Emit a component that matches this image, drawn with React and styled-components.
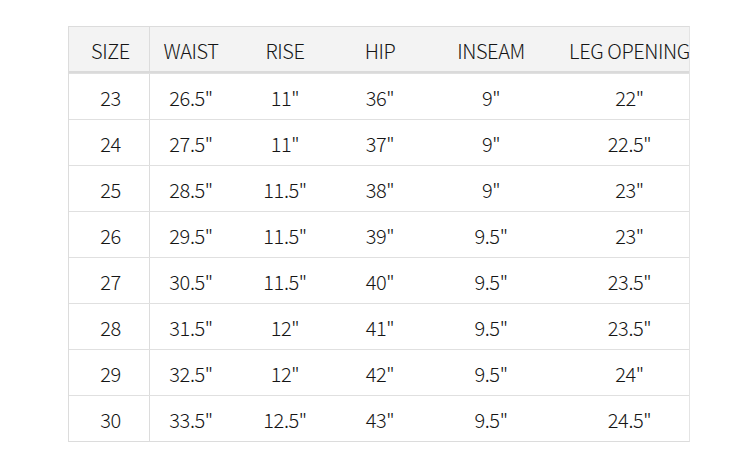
import styled, { createGlobalStyle } from 'styled-components'

const GlobalStyle = createGlobalStyle`
  html, body {
    margin: 0;
    padding: 0;
    background: #fff;
  }
`

const headers = ['SIZE', 'WAIST', 'RISE', 'HIP', 'INSEAM', 'LEG OPENING']

const rows = [
  ['23', '26.5"', '11"', '36"', '9"', '22"'],
  ['24', '27.5"', '11"', '37"', '9"', '22.5"'],
  ['25', '28.5"', '11.5"', '38"', '9"', '23"'],
  ['26', '29.5"', '11.5"', '39"', '9.5"', '23"'],
  ['27', '30.5"', '11.5"', '40"', '9.5"', '23.5"'],
  ['28', '31.5"', '12"', '41"', '9.5"', '23.5"'],
  ['29', '32.5"', '12"', '42"', '9.5"', '24"'],
  ['30', '33.5"', '12.5"', '43"', '9.5"', '24.5"'],
]

const App = () => {
  return (
    <>
      <GlobalStyle />
      <Page>
        <Table>
          <HeadRow>
            {headers.map((h, i) => (
              <Cell key={h} $first={i === 0} $last={i === 5}>{h}</Cell>
            ))}
          </HeadRow>
          {rows.map((r) => (
            <Row key={r[0]}>
              {r.map((v, i) => (
                <Cell key={i} $first={i === 0} $last={i === 5}>{v}</Cell>
              ))}
            </Row>
          ))}
        </Table>
      </Page>
    </>
  )
}

export default App

const Page = styled.div`
  width: 750px;
  height: 470px;
  padding: 26px 0 0 68px;
  box-sizing: border-box;
  font-family: 'Noto Sans CJK SC', 'Noto Sans', sans-serif;
  font-weight: 300;
  color: #151515;
`
const Table = styled.div`
  width: 622px;
  border: 1px solid #dcdcdc;
  border-right-color: #e4e4e4;
  box-sizing: border-box;
`
const Row = styled.div`
  display: grid;
  grid-template-columns: 81px 82px 106px 84px 138px 129px;
  height: 45px;
  align-items: center;
  border-top: 1px solid #e0e0e0;
  font-size: 20px;
`
const HeadRow = styled(Row)`
  height: 44px;
  border-top: none;
  border-bottom: 2px solid #dadada;
  background: #f3f3f3;
  white-space: nowrap;
  overflow: hidden;
`
const Cell = styled.div`
  height: 100%;
  display: flex;
  align-items: center;
  justify-content: center;
  padding: 2px 0 0 ${(p) => (p.$last ? '10px' : p.$first ? '3px' : '0')};
  box-sizing: border-box;
  letter-spacing: -0.4px;
  border-right: ${(p) => (p.$first ? '1px solid #dcdcdc' : 'none')};
`
